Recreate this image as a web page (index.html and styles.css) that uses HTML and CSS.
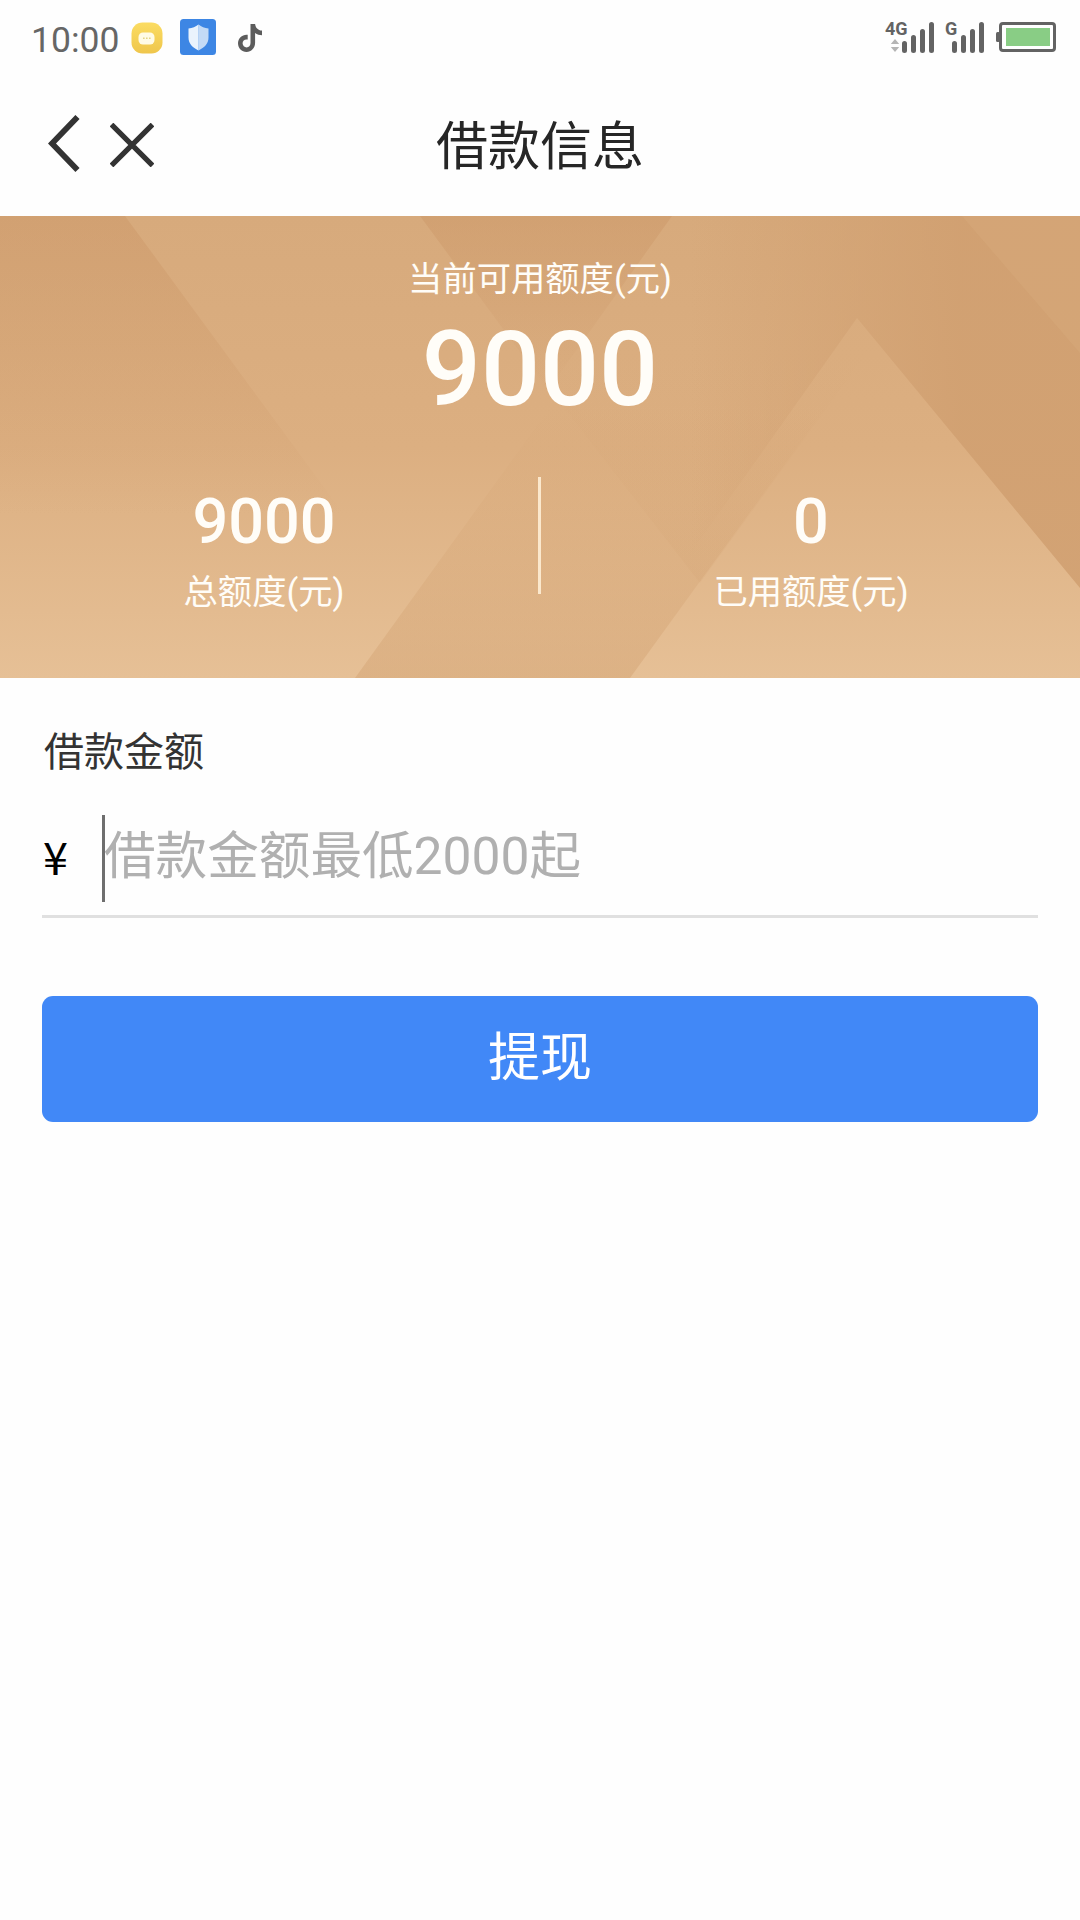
FILE: index.html
```html
<!DOCTYPE html>
<html lang="zh-CN">
<head>
  <meta charset="UTF-8" />
  <meta name="viewport" content="width=device-width, initial-scale=1.0"/>
  <title>借款信息</title>
  <link rel="stylesheet" href="styles.css">
</head>
<body>
  <div class="status-bar">
    <div class="status-left">
      <span class="time">10:00</span>
      <svg class="icon-message" width="32" height="32" viewBox="0 0 32 32">
        <defs>
          <linearGradient id="yellow" x1="0" y1="0" x2="0" y2="1">
            <stop offset="0" stop-color="#fbdc62"/>
            <stop offset="1" stop-color="#efc64c"/>
          </linearGradient>
        </defs>
        <rect x="0.5" y="0.5" width="31" height="31" rx="11" fill="url(#yellow)"/>
        <rect x="7.5" y="10.5" width="16" height="12" rx="4.5" fill="#fffbe6"/>
        <path d="M12 16.2h1.6M15 16.2h1.6M18 16.2h1.6" stroke="#e3d486" stroke-width="1.4"/>
      </svg>
      <svg class="icon-shield" width="36" height="36" viewBox="0 0 36 36">
        <rect width="36" height="36" rx="3.5" fill="#3d86e4"/>
        <path d="M18.500 5.500c3 2.400 6 3.600 10 4v9c0 6-4 10-10 13z" fill="#c3daf6"/>
        <path d="M18.500 5.500c-3 2.400-6 3.600-10 4v9c0 6 4 10 10 13z" fill="#eaf3fd"/>
      </svg>
      <svg class="icon-note" width="24" height="28" viewBox="0 0 24 28">
        <path d="M12.500 0h4.600c.4 3.700 2.700 6.300 6.900 6.600v4.700c-2.500 0-4.900-.8-6.900-2.200v9.700c0 5.300-3.900 9.200-8.600 9.200S0 24.200 0 19.300c0-5.200 4.300-9.200 9.700-8.600v4.900c-2.700-.8-5.100 1.100-5.100 3.700 0 2.300 1.800 4.100 4 4.100 2.300 0 3.900-1.700 3.900-4.400z" fill="#5c5c5c"/>
      </svg>
    </div>
    <div class="status-right">
      <div class="signal">
        <span class="signal-text">4G</span>
        <svg width="49" height="32" viewBox="0 0 49 32">
          <path d="M9 17l4.200 5H4.800zM9 30l4.200-5H4.800z" fill="#b5b5b5"/>
          <path d="M18.500 21.500v7M27.500 15.500v13M36.500 9.500v19M45.500 2.500v26" stroke="#636363" stroke-width="5" stroke-linecap="round"/>
        </svg>
      </div>
      <div class="signal">
        <span class="signal-text">G</span>
        <svg width="39" height="32" viewBox="0 0 39 32">
          <path d="M8.500 21.500v7M17.500 15.500v13M26.500 9.500v19M35.500 2.500v26" stroke="#636363" stroke-width="5" stroke-linecap="round"/>
        </svg>
      </div>
      <svg class="battery" width="60" height="30" viewBox="0 0 60 30">
        <rect x="0" y="10" width="4" height="10" rx="1.500" fill="#636363"/>
        <rect x="4.500" y="1.500" width="54" height="27" rx="2.500" fill="#fff" stroke="#636363" stroke-width="3"/>
        <rect x="10" y="6" width="44" height="18" fill="#89cd85"/>
      </svg>
    </div>
  </div>

  <div class="header">
    <div class="nav">
      <svg width="32" height="58" viewBox="0 0 32 58">
        <path d="M29.500 2L4 28.500L29.500 55" fill="none" stroke="#333" stroke-width="5.800"/>
      </svg>
      <svg class="close" width="44" height="44" viewBox="0 0 44 44">
        <path d="M1.500 1.500L42.500 42.500M42.500 1.500L1.500 42.500" stroke="#333" stroke-width="5.200"/>
      </svg>
    </div>
    <div class="title">借款信息</div>
  </div>

  <div class="quota">
    <svg class="quota-bg" width="1080" height="462" viewBox="0 0 1080 462">
      <defs>
        <linearGradient id="base" x1="0" y1="0" x2="0" y2="1">
          <stop offset="0" stop-color="#d7aa7c"/>
          <stop offset="0.5" stop-color="#dcaf81"/>
          <stop offset="1" stop-color="#e6c096"/>
        </linearGradient>
        <linearGradient id="fade" x1="0" y1="0" x2="0" y2="1">
          <stop offset="0" stop-color="#c99363" stop-opacity="0.4"/>
          <stop offset="1" stop-color="#c99363" stop-opacity="0"/>
        </linearGradient>
        <linearGradient id="band" gradientUnits="userSpaceOnUse" x1="0" y1="190" x2="0" y2="462">
          <stop offset="0" stop-color="#cf9d6c" stop-opacity="0"/>
          <stop offset="1" stop-color="#cf9d6c" stop-opacity="0.4"/>
        </linearGradient>
        <linearGradient id="facet" gradientUnits="userSpaceOnUse" x1="0" y1="130" x2="0" y2="370">
          <stop offset="0" stop-color="#cf9d6c" stop-opacity="0"/>
          <stop offset="1" stop-color="#cf9d6c" stop-opacity="0.14"/>
        </linearGradient>
        <linearGradient id="right" gradientUnits="userSpaceOnUse" x1="690" y1="0" x2="960" y2="0">
          <stop offset="0" stop-color="#d09f70" stop-opacity="0"/>
          <stop offset="1" stop-color="#d09f70" stop-opacity="0.85"/>
        </linearGradient>
      </defs>
      <rect width="1080" height="462" fill="url(#base)"/>
      <path d="M0 0H125L345 300H0z" fill="url(#fade)"/>
      <path d="M420 0H672L548 174z" fill="url(#fade)"/>
      <path d="M355 462L551 190H827L630 462z" fill="url(#band)"/>
      <path d="M516 130L700 367L872 130z" fill="url(#facet)"/>
      <path d="M690 0H1080V372L857 102L690 338z" fill="url(#right)"/>
      <path d="M962 0H1080V137z" fill="#dbae81" opacity="0.3"/>
    </svg>
    <div class="quota-label">当前可用额度(元)</div>
    <div class="quota-num">9000</div>
    <div class="quota-row">
      <div class="quota-item">
        <div class="item-num">9000</div>
        <div class="item-label">总额度(元)</div>
      </div>
      <div class="divider"></div>
      <div class="quota-item">
        <div class="item-num">0</div>
        <div class="item-label">已用额度(元)</div>
      </div>
    </div>
  </div>

  <div class="form">
    <div class="form-label">借款金额</div>
    <div class="input-row">
      <span class="yen">¥</span>
      <span class="cursor"></span>
      <span class="placeholder">借款金额最低2000起</span>
    </div>
    <button class="submit" type="button">提现</button>
  </div>
</body>
</html>
```

FILE: styles.css
```css
* {
  box-sizing: border-box;
  margin: 0;
  padding: 0;
}
body {
  background-color: #fefefe;
  font-family: Roboto, "Noto Sans CJK SC", sans-serif;
  min-height: 100vh;
}
svg {
  display: block;
  flex: none;
}

/* Status bar */
.status-bar {
  display: flex;
  justify-content: space-between;
  height: 72px;
  padding: 0 24px 0 31px;
}
.status-left,
.status-right {
  display: flex;
  align-items: flex-start;
}
.time {
  width: 100px;
  padding-top: 19px;
  font-size: 35.5px;
  line-height: 42px;
  color: #666;
}
.icon-message {
  margin-top: 22px;
}
.icon-shield {
  margin: 19px 0 0 17px;
}
.icon-note {
  margin: 24px 0 0 22px;
}
.signal {
  position: relative;
  margin: 22px 0 0 11px;
}
.signal-text {
  position: absolute;
  top: -4px;
  left: -1px;
  font-size: 18px;
  font-weight: bold;
  line-height: 22px;
  color: #636363;
}
.battery {
  margin: 22px 0 0 11px;
}

/* Header */
.header {
  display: grid;
  grid-template-columns: 1fr auto 1fr;
  height: 144px;
}
.nav {
  display: flex;
  align-items: flex-start;
  padding: 43px 0 0 48px;
}
.close {
  margin: 8px 0 0 30px;
}
.title {
  padding-top: 46px;
  font-size: 52px;
  line-height: 60px;
  color: #262626;
}

/* Quota */
.quota {
  position: relative;
  height: 462px;
  padding-top: 41px;
  color: #fffdf8;
  text-align: center;
}
.quota-bg {
  position: absolute;
  top: 0;
  left: 0;
  z-index: -1;
}
.quota-label {
  font-size: 34.3px;
  line-height: 44px;
}
.quota-num {
  padding-top: 4px;
  font-size: 104px;
  font-weight: 500;
  line-height: 130px;
}
.quota-row {
  display: grid;
  grid-template-columns: 528px 3px 538px;
  justify-content: space-between;
  margin-top: 42px;
}
.quota-item {
  padding-top: 10px;
}
.divider {
  width: 3px;
  height: 117px;
  margin-left: 4px;
  background-color: #fbe8cd;
}
.item-num {
  font-size: 63px;
  font-weight: 500;
  line-height: 70px;
}
.item-label {
  margin-top: 15px;
  font-size: 34.3px;
  line-height: 40px;
}

/* Form */
.form {
  padding: 51px 42px 0;
}
.form-label {
  padding-left: 2px;
  font-size: 40px;
  line-height: 48px;
  color: #333;
}
.input-row {
  display: flex;
  height: 141px;
  padding-top: 38px;
  border-bottom: 3px solid #e0e0e0;
}
.yen {
  width: 60px;
  padding: 15px 0 0 1px;
  font-family: "Noto Sans CJK SC", sans-serif;
  font-size: 45px;
  line-height: 52px;
  color: #000;
}
.cursor {
  width: 3px;
  height: 87px;
  background-color: #6e6e6e;
}
.placeholder {
  margin-left: -1px;
  padding-top: 11px;
  font-size: 51.6px;
  line-height: 62px;
  color: #b0b0b0;
}
.submit {
  display: block;
  width: 100%;
  height: 126px;
  margin-top: 78px;
  padding-bottom: 12px;
  border: none;
  border-radius: 11px;
  background-color: #4188f7;
  color: #fff;
  font-family: inherit;
  font-size: 52px;
}
```
